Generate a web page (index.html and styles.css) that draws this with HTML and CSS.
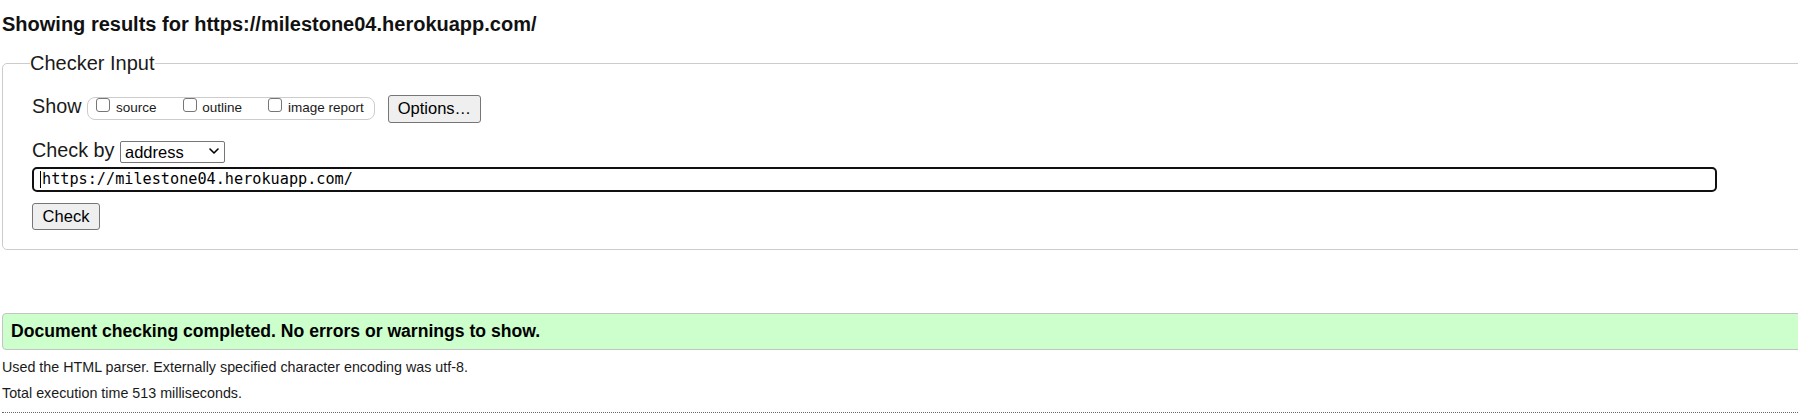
FILE: index.html
```html
<!DOCTYPE html>
<html lang="en">
<head>
<meta charset="utf-8">
<title>Nu Html Checker</title>
<link rel="stylesheet" href="styles.css">
</head>
<body>
<h2 class="results-title">Showing results for https://milestone04.herokuapp.com/</h2>
<fieldset class="checker">
  <legend class="checker-legend">Checker Input</legend>
  <div class="row row-show">
    <span class="row-label">Show</span>
    <div class="option-group">
      <label class="option"><input type="checkbox" class="check"><span class="option-text">source</span></label>
      <label class="option"><input type="checkbox" class="check"><span class="option-text">outline</span></label>
      <label class="option"><input type="checkbox" class="check"><span class="option-text">image report</span></label>
    </div>
    <button type="button" class="btn btn-options">Options…</button>
  </div>
  <div class="row row-by">
    <span class="row-label">Check by</span>
    <span class="select-wrap">
      <select class="select"><option>address</option></select>
      <svg class="chevron" viewBox="0 0 10 6" aria-hidden="true"><path d="M1 1 L5 5 L9 1" fill="none" stroke="#000" stroke-width="1.6" stroke-linecap="round" stroke-linejoin="round"/></svg>
    </span>
  </div>
  <div class="row row-url">
    <span class="url-wrap">
      <input type="url" class="url" value="https://milestone04.herokuapp.com/">
      <span class="caret"></span>
    </span>
  </div>
  <div class="row row-submit">
    <button type="button" class="btn btn-check">Check</button>
  </div>
</fieldset>
<div class="success">Document checking completed. No errors or warnings to show.</div>
<p class="details">Used the HTML parser. Externally specified character encoding was utf-8.</p>
<p class="details details-time">Total execution time 513 milliseconds.</p>
<hr class="divider">
</body>
</html>
```

FILE: styles.css
```css
html {
  overflow: hidden;
}

body {
  margin: 0;
  padding: 0 0 0 2px;
  font-family: "Liberation Sans", Arial, sans-serif;
  color: #1a1a1a;
  background: #fff;
}

.results-title {
  font-size: 20px;
  font-weight: bold;
  line-height: normal;
  margin: 12.5px 0 0;
  color: #111;
}

.checker {
  margin: 16px -40px 0 0;
  padding: 20px 0 19px 29px;
  border: 1px solid #ccc;
  border-radius: 5px;
  min-width: 0;
}

.checker-legend {
  font-size: 20px;
  line-height: normal;
  padding: 0;
  margin-left: -2px;
}

.row {
  display: flex;
  align-items: flex-start;
}

.row-label {
  font-size: 19.8px;
  line-height: normal;
}

.option-group {
  display: flex;
  align-items: flex-start;
  gap: 26.3px;
  box-sizing: border-box;
  height: 23px;
  margin: 2px 0 0 6px;
  padding: 0 10px 0 8px;
  border: 1px solid #ccc;
  border-radius: 8px;
}

.option {
  display: flex;
  align-items: flex-start;
  font-size: 13.5px;
  line-height: normal;
}

.check {
  -webkit-appearance: none;
  appearance: none;
  box-sizing: border-box;
  width: 14px;
  height: 14px;
  margin: 0;
  border: 1px solid #767676;
  border-radius: 3px;
  background: #fff;
}

.option-text {
  margin: 2.8px 0 0 5.5px;
}

.btn {
  box-sizing: border-box;
  font-family: "Liberation Sans", Arial, sans-serif;
  font-size: 16.5px;
  line-height: normal;
  color: #000;
  background: #efefef;
  border: 1px solid #767676;
  border-radius: 3px;
  padding: 0 9px;
  margin: 0;
}

.btn-options {
  width: 93px;
  height: 28px;
  margin-left: 13px;
}

.row-by {
  margin-top: 16px;
}

.select-wrap {
  position: relative;
  display: block;
  margin: 2px 0 0 5.5px;
}

.select {
  -webkit-appearance: none;
  appearance: none;
  display: block;
  box-sizing: border-box;
  width: 105px;
  height: 22px;
  margin: 0;
  padding: 0 0 0 4px;
  border: 1px solid #767676;
  border-radius: 2px;
  background: #fff;
  color: #000;
  font: 16.5px "Liberation Sans", Arial, sans-serif;
}

.chevron {
  position: absolute;
  right: 6px;
  top: 7px;
  width: 10px;
  height: 6px;
  pointer-events: none;
}

.row-url {
  margin-top: 4px;
}

.url-wrap {
  position: relative;
  display: block;
}

.url {
  display: block;
  box-sizing: border-box;
  width: 1685px;
  height: 25px;
  margin: 0;
  padding: 0 4px 0 8px;
  border: 2px solid #101010;
  border-radius: 5px;
  outline: none;
  background: #fff;
  color: #000;
  font: 15.2px "DejaVu Sans Mono", monospace;
}

.caret {
  position: absolute;
  left: 8px;
  top: 4px;
  width: 1px;
  height: 17px;
  background: #000;
}

.row-submit {
  margin-top: 11px;
}

.btn-check {
  width: 68px;
  height: 27px;
}

.success {
  margin: 63.5px -40px 0 0;
  padding: 7px 8px 8px 8px;
  line-height: 20px;
  font-size: 17.6px;
  font-weight: bold;
  color: #000;
  background: #ccffcc;
  border: 1px solid #c4c4c4;
  border-radius: 4px;
}

.details {
  margin: 8.5px 0 0;
  font-size: 14.3px;
  line-height: 17px;
}

.details-time {
  margin-top: 9px;
}

.divider {
  height: 0;
  margin: 10px 0 0;
  border: 0;
  border-top: 1px dotted #666;
}
```
